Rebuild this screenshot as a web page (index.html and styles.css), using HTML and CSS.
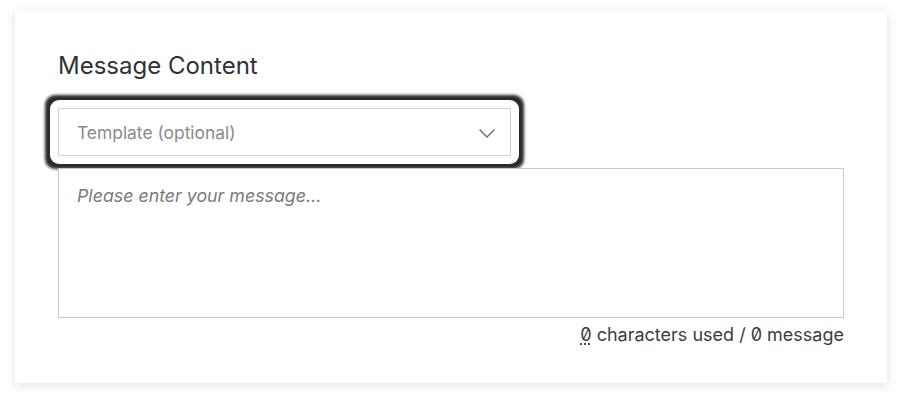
FILE: index.html
```html
<!DOCTYPE html>
<html lang="en">
<head>
<meta charset="utf-8">
<title>Message Content</title>
<link rel="stylesheet" href="styles.css">
</head>
<body>
<section class="card">
  <h2 class="title">Message Content</h2>
  <div class="select-ring">
    <div class="select" role="combobox" tabindex="0">
      <span class="select-placeholder">Template (optional)</span>
      <svg class="chevron" width="16" height="9" viewBox="0 0 16 9" aria-hidden="true">
        <path d="M1 1 L8 8 L15 1" fill="none" stroke="#666666" stroke-width="1.3" stroke-linecap="round" stroke-linejoin="round"/>
      </svg>
    </div>
  </div>
  <textarea class="message" placeholder="Please enter your message..."></textarea>
  <p class="counter"><abbr class="count" title="characters">0</abbr> characters used / 0 message</p>
</section>
</body>
</html>
```
FILE: styles.css
```css
html, body {
  margin: 0;
  padding: 0;
  background: #ffffff;
}

body {
  font-family: Inter, "Noto Sans", "Liberation Sans", sans-serif;
  color: #32363a;
}

.card {
  margin: 11px 15px 20px;
  height: 372px;
  box-sizing: border-box;
  padding: 41px 43px 0;
  background: #ffffff;
  box-shadow: 0 2px 10px rgba(0, 0, 0, 0.13);
  display: flex;
  flex-direction: column;
}

.title {
  margin: 0;
  font-size: 24px;
  line-height: 28px;
  font-weight: 400;
  color: #2f3236;
}

.select-ring {
  margin-top: 28px;
  width: 453px;
  border-radius: 3px;
  box-shadow: 0 0 0 8px #ffffff, 0 0 3px 13px #2a2a2a;
}

.select {
  box-sizing: border-box;
  height: 48px;
  border: 1px solid #cfcfcf;
  border-radius: 2px;
  background: #ffffff;
  padding: 0 15px 0 18px;
  display: flex;
  align-items: center;
  justify-content: space-between;
  outline: none;
}

.select-placeholder {
  font-size: 17.4px;
  color: #8a8a8a;
}

.chevron {
  display: block;
  margin-top: 2px;
}

.message {
  margin-top: 12px;
  box-sizing: border-box;
  width: 786px;
  height: 150px;
  border: 1px solid #c9c9c9;
  border-radius: 0;
  padding: 16px 18px;
  font-family: Inter, "Noto Sans", "Liberation Sans", sans-serif;
  font-size: 17.8px;
  line-height: 22px;
  resize: none;
  outline: none;
  color: #32363a;
}

.message::placeholder {
  font-style: italic;
  color: #7a7a7a;
}

.counter {
  margin: 6px 0 0;
  width: 786px;
  text-align: right;
  font-size: 18px;
  line-height: 22px;
  color: #3a3d40;
  font-feature-settings: "zero" 1;
}

.count {
  text-decoration: underline dotted;
  text-underline-offset: 3px;
}
```
